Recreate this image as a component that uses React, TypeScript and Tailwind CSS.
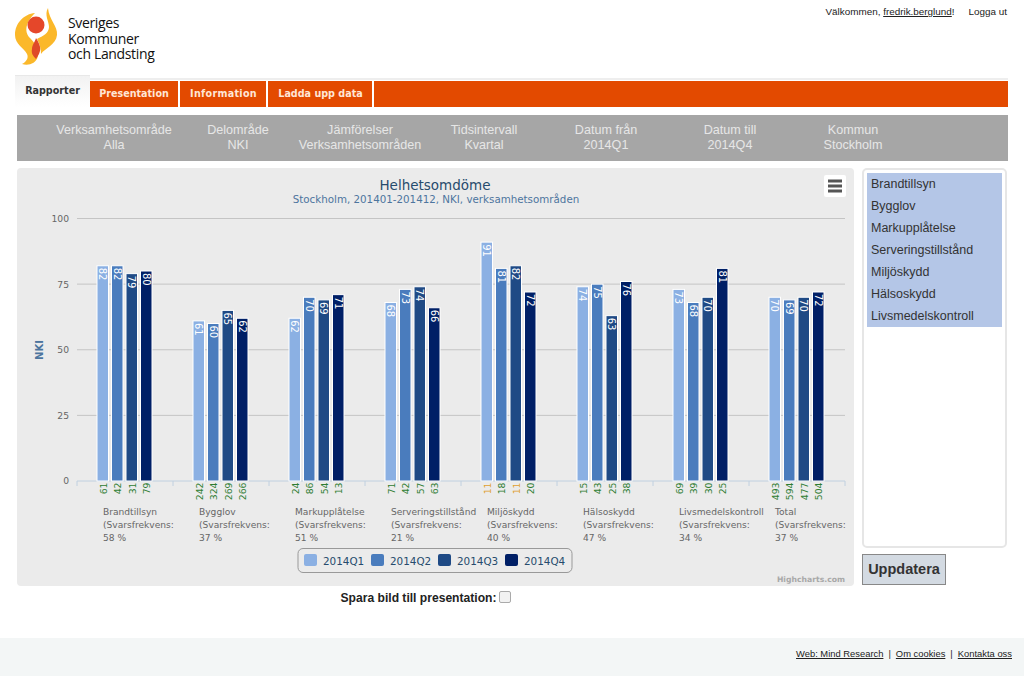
const cats = [
  { name: "Brandtillsyn", pct: "58 %", v: [82, 82, 79, 80], n: [61, 42, 31, 79] },
  { name: "Bygglov", pct: "37 %", v: [61, 60, 65, 62], n: [242, 324, 269, 266] },
  { name: "Markupplåtelse", pct: "51 %", v: [62, 70, 69, 71], n: [24, 86, 54, 13] },
  { name: "Serveringstillstånd", pct: "21 %", v: [68, 73, 74, 66], n: [71, 42, 57, 63] },
  { name: "Miljöskydd", pct: "40 %", v: [91, 81, 82, 72], n: [11, 18, 11, 20] },
  { name: "Hälsoskydd", pct: "47 %", v: [74, 75, 63, 76], n: [15, 43, 25, 38] },
  { name: "Livsmedelskontroll", pct: "34 %", v: [73, 68, 70, 81], n: [69, 39, 30, 25] },
  { name: "Total", pct: "37 %", v: [70, 69, 70, 72], n: [493, 594, 477, 504] },
];
const colors = ["#8bb0e3", "#4a7cbd", "#1f4a85", "#001f66"];
const filters = [
  ["Verksamhetsområde", "Alla", 114],
  ["Delområde", "NKI", 238],
  ["Jämförelser", "Verksamhetsområden", 360],
  ["Tidsintervall", "Kvartal", 484],
  ["Datum från", "2014Q1", 606],
  ["Datum till", "2014Q4", 730],
  ["Kommun", "Stockholm", 853],
];
const areas = ["Brandtillsyn", "Bygglov", "Markupplåtelse", "Serveringstillstånd", "Miljöskydd", "Hälsoskydd", "Livsmedelskontroll"];
const chartFont = { fontFamily: "'DejaVu Sans', sans-serif" };

function Logo() {
  return (
    <svg width="45" height="59" viewBox="15 8 45 59" className="shrink-0">
      <path d="M35 13C24 14 15 23 15 35C15 44 24 48 27 54C29 58 26 62 22 64C28 66 36 64 38 56C39 50 36 44 30 38C25 33 24 24 35 13Z" fill="#fbb82a" />
      <path d="M48 8C44 15 49 21 49 27C49 33 43 36 37 39C40 44 41 50 41 54C45 48 56 45 57 35C58 26 49 20 48 8Z" fill="#fbb82a" />
      <circle cx="36" cy="25" r="8.5" fill="#e5472a" />
      <path d="M36 38C39 43 41 47 40 51C39 55 37 57 36 59C33 56 31 53 32 49C32 45 35 42 36 38Z" fill="#df4a28" />
    </svg>
  );
}

function Chart() {
  return (
    <svg viewBox="17 168 837 418" className="block w-full h-full" style={chartFont}>
      <rect x="17" y="168" width="837" height="418" rx="4" fill="#ebebeb" />
      <text x="435" y="190" textAnchor="middle" fontSize="13.5" fill="#274b6d">Helhetsomdöme</text>
      <text x="436" y="203" textAnchor="middle" fontSize="10.3" fill="#4d759e">Stockholm, 201401-201412, NKI, verksamhetsområden</text>
      <rect x="824" y="175" width="22" height="22" rx="2" fill="#ffffff" />
      <path d="M828 181h14M828 186h14M828 191h14" stroke="#555555" strokeWidth="3" />
      {[100, 75, 50, 25].map((t) => {
        const y = 481 - t * 2.625;
        return (
          <g key={t}>
            <line x1="77" x2="845" y1={y} y2={y} stroke="#c4c4c4" />
            <text x="69" y={y + 3.5} textAnchor="end" fontSize="9.2" fill="#666666">{t}</text>
          </g>
        );
      })}
      <text x="69" y="484" textAnchor="end" fontSize="9.2" fill="#666666">0</text>
      <text transform="translate(43 350) rotate(-90)" textAnchor="middle" fontSize="10" fontWeight="bold" fill="#4d759e">NKI</text>
      <line x1="77" x2="845" y1="481" y2="481" stroke="#c0d0e0" />
      {cats.map((c, i) => {
        const ox = i * 96;
        return (
          <g key={c.name}>
            <line x1={77 + ox} x2={77 + ox} y1="481" y2="486" stroke="#c0d0e0" />
            {i === 7 && <line x1="845" x2="845" y1="481" y2="486" stroke="#c0d0e0" />}
            {c.v.map((v, j) => {
              const x = 97 + ox + j * 14.5;
              const top = 481 - v * 2.625;
              return (
                <g key={j}>
                  <rect x={x} y={top} width="11.5" height={481 - top} fill={colors[j]} stroke="#ffffff" />
                  <text transform={`translate(${x + 2} ${top + 2}) rotate(90)`} fontSize="10" fill="#ffffff">{v}</text>
                  <text
                    transform={`translate(${x + 9.5} 482.5) rotate(-90)`}
                    textAnchor="end"
                    fontSize="9.3"
                    fill={c.n[j] === 11 ? "#e0a030" : "#2e7d32"}
                  >
                    {c.n[j]}
                  </text>
                </g>
              );
            })}
            <text fontSize="9.1" fill="#666666">
              <tspan x={103 + ox} y="515">{c.name}</tspan>
              <tspan x={103 + ox} y="528">(Svarsfrekvens:</tspan>
              <tspan x={103 + ox} y="541">{c.pct}</tspan>
            </text>
          </g>
        );
      })}
      <rect x="298" y="548.5" width="274" height="24" rx="5" fill="#ebebeb" stroke="#999999" />
      {["2014Q1", "2014Q2", "2014Q3", "2014Q4"].map((l, i) => (
        <g key={l}>
          <rect x={304 + i * 67} y="554" width="13" height="12" rx="2" fill={colors[i]} />
          <text x={323 + i * 67} y="564.5" fontSize="10.4" fill="#274b6d">{l}</text>
        </g>
      ))}
      <text x="845" y="582" textAnchor="end" fontSize="7.7" fontWeight="bold" fill="#a8a8a8">Highcharts.com</text>
    </svg>
  );
}

export default function App() {
  return (
    <div className="w-[1024px] h-[676px] overflow-hidden bg-white flex flex-col font-['Liberation_Sans',sans-serif]">
      {/* Header */}
      <div className="h-[75px] flex justify-between pl-[15px] pr-[17px] pt-[8px]">
        <div className="flex gap-[8px] h-[59px]">
          <Logo />
          <div className="font-['Open_Sans',sans-serif] text-[#111111] text-[14px] leading-[15.5px] pt-[7px] tracking-[-0.35px]">
            <div>Sveriges</div>
            <div>Kommuner</div>
            <div>och Landsting</div>
          </div>
        </div>
        <div className="text-[9.9px] text-[#222222] flex gap-[14px] h-[12px] -mt-[3px] ml-auto">
          <span>Välkommen, <span className="underline">fredrik.berglund</span>!</span>
          <span>Logga ut</span>
        </div>
      </div>

      {/* Tabs */}
      <div className="ml-[15px] mr-[16px] h-[32px] relative flex items-end font-['DejaVu_Sans',sans-serif] text-[9.6px] font-bold">
        <div className="absolute left-0 right-0 top-[3px] h-[2px] bg-[#eeeeee]" />
        <div className="relative h-[32px] w-[75px] bg-gradient-to-b from-[#f2f2f2] to-white text-[#333333] flex items-center justify-center pb-[1px] border-t border-[#e8e8e8]">Rapporter</div>
        <div className="relative flex-1 h-[26px] flex gap-[1px] bg-[#e34a00] text-[#ffe6d5]">
          <div className="w-[90px] flex items-center justify-center border-r-2 border-white pt-[1px]">Presentation</div>
          <div className="w-[87px] flex items-center justify-center border-r-2 border-white pt-[1px] tracking-[0.3px]">Information</div>
          <div className="w-[105px] flex items-center justify-center border-r-2 border-white pt-[1px]">Ladda upp data</div>
        </div>
      </div>

      {/* Filter bar */}
      <div className="ml-[17px] mr-[16px] mt-[8px] h-[46px] bg-[#a6a6a6] relative shrink-0">
        {filters.map(([a, b, x]) => (
          <div
            key={a as string}
            className="absolute top-[8px] -translate-x-1/2 text-center text-[12.6px] leading-[14.5px] text-[#e6e6e6] whitespace-nowrap"
            style={{ left: (x as number) - 17 }}
          >
            <div>{a}</div>
            <div>{b}</div>
          </div>
        ))}
      </div>

      {/* Main */}
      <div className="flex mt-[7px] ml-[17px] gap-[8px]">
        <div className="w-[837px] shrink-0">
          <div className="h-[418px]">
            <Chart />
          </div>
          <div className="flex items-center justify-center gap-[3px] mt-[3px] pr-[19px] text-[#222222] font-bold text-[12.1px]">
            <span>Spara bild till presentation:</span>
            <span className="w-[12px] h-[12px] rounded-[2px] border border-[#aaaaaa] bg-[#f2f2f2] -mt-[3px]" />
          </div>
        </div>
        <div className="w-[145px] shrink-0">
          <div className="h-[380px] border-2 border-[#e6e6e6] rounded-[5px] p-[3px] bg-white">
            <div className="bg-[#b4c6e7] text-[#333333] text-[12.5px]">
              {areas.map((a) => (
                <div key={a} className="h-[22px] flex items-center pl-[4px]">{a}</div>
              ))}
            </div>
          </div>
          <div className="mt-[6px] w-[84px] h-[31px] bg-[#d3dae2] border border-[#888888] flex items-center justify-center text-[14.5px] font-bold text-[#333333]">Uppdatera</div>
        </div>
      </div>

      {/* Footer */}
      <div className="mt-auto h-[38px] bg-[#f3f6f6] flex items-center justify-end pr-[12px] pb-[5px] text-[9.4px] text-[#222222] gap-[5px]">
        <span className="underline">Web: Mind Research</span>
        <span>|</span>
        <span className="underline">Om cookies</span>
        <span>|</span>
        <span className="underline">Kontakta oss</span>
      </div>
    </div>
  );
}
